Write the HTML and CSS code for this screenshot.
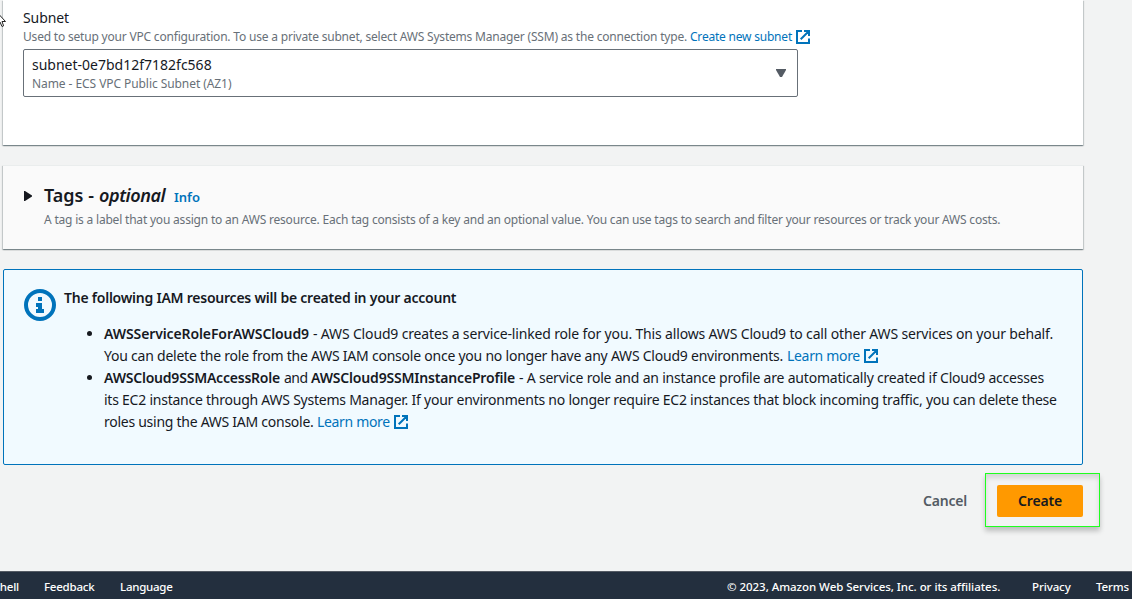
FILE: index.html
```
<!DOCTYPE html>
<html lang="en">
<head>
<meta charset="utf-8">
<title>Create environment</title>
<link rel="stylesheet" href="styles.css">
</head>
<body>
<svg class="sprite" aria-hidden="true">
  <symbol id="external" viewBox="0 0 14 14"><path d="M6 1H1v12h12V8.5M8 1h5v5M4.7 9.3L12.5 1.5" fill="none" stroke="currentColor" stroke-width="2"/></symbol>
</svg>
<svg class="cursor" viewBox="0 0 7 16" aria-hidden="true"><path d="M-4 0V12L0 9L2 13.5L3.6 12.8L2 8.5H5.5L-.5 2Z" fill="#fff" stroke="#222" stroke-width="1"/></svg>
<main class="page">
  <section class="card network">
    <div class="label">Subnet</div>
    <div class="hint"><span class="fit-hint">Used to setup your VPC configuration. To use a private subnet, select AWS Systems Manager (SSM) as the connection type.</span><a class="link hint-link">Create new subnet</a><svg class="ext"><use href="#external"/></svg></div>
    <div class="select">
      <div class="select-text">
        <div class="value">subnet-0e7bd12f7182fc568</div>
        <div class="detail">Name - ECS VPC Public Subnet (AZ1)</div>
      </div>
      <svg class="caret" viewBox="0 0 10 8"><path d="M0 0H10V1L6 8H4L0 1Z" fill="#545b64"/></svg>
    </div>
  </section>

  <section class="card tags">
    <svg class="expand" viewBox="0 0 8 10"><path d="M0 0H1L8 4.5v1L1 10H0Z" fill="#16191f"/></svg>
    <div>
      <div class="tags-title"><h2>Tags -</h2><em>optional</em><a class="info">Info</a></div>
      <p class="tags-desc">A tag is a label that you assign to an AWS resource. Each tag consists of a key and an optional value. You can use tags to search and filter your resources or track your AWS costs.</p>
    </div>
  </section>

  <section class="alert">
    <svg class="alert-icon" viewBox="0 0 32 32"><circle cx="16" cy="16" r="14" fill="none" stroke="#0073bb" stroke-width="4"/><path d="M14 8h4v4h-4ZM12 14h6v6h2v4h-8v-4h2v-2h-2Z" fill="#0073bb"/></svg>
    <div class="alert-body">
      <h3>The following IAM resources will be created in your account</h3>
      <ul>
        <li>
          <div class="line"><b class="role-a">AWSServiceRoleForAWSCloud9</b><span class="text-a">- AWS Cloud9 creates a service-linked role for you. This allows AWS Cloud9 to call other AWS services on your behalf.</span></div>
          <div class="line"><span>You can delete the role from the AWS IAM console once you no longer have any AWS Cloud9 environments.</span><a class="link learn">Learn more</a><svg class="ext"><use href="#external"/></svg></div>
        </li>
        <li>
          <div class="line"><b class="role-b">AWSCloud9SSMAccessRole</b><span class="and">and</span><b class="role-c">AWSCloud9SSMInstanceProfile</b><span class="text-b">- A service role and an instance profile are automatically created if Cloud9 accesses</span></div>
          <div class="line"><span class="text-c">its EC2 instance through AWS Systems Manager. If your environments no longer require EC2 instances that block incoming traffic, you can delete these</span></div>
          <div class="line"><span class="text-d">roles using the AWS IAM console.</span><a class="link learn">Learn more</a><svg class="ext"><use href="#external"/></svg></div>
        </li>
      </ul>
    </div>
  </section>

  <div class="actions">
    <a class="cancel">Cancel</a>
    <div class="create-wrap"><button class="create">Create</button><span class="highlight"></span></div>
  </div>
</main>
<footer class="footer">
  <nav class="foot-left"><a class="shell">CloudShell</a><a class="feedback">Feedback</a><a class="language">Language</a></nav>
  <div class="foot-right"><span class="copyright">© 2023, Amazon Web Services, Inc. or its affiliates.</span><a class="privacy">Privacy</a><a class="terms">Terms</a></div>
</footer>
</body>
</html>
```
FILE: styles.css
```
* { box-sizing: border-box; }
body { margin: 0; width: 1132px; height: 599px; overflow: hidden; display: flex; flex-direction: column; background: #f2f3f3; color: #16191f; font: 14px/22px "Noto Sans", sans-serif; white-space: nowrap; }
h2, h3, p, ul { margin: 0; padding: 0; }
.sprite { position: absolute; width: 0; height: 0; }
.cursor { position: absolute; left: 0; top: 13px; width: 7px; height: 16px; }
.page { width: 1080px; margin-left: 3px; flex: 1; display: flex; flex-direction: column; }
.card { border-top: 1px solid #eaeded; box-shadow: 0 1px 1px 0 rgba(0,28,36,.3), 1px 1px 1px 0 rgba(0,28,36,.15), -1px 1px 1px 0 rgba(0,28,36,.15); }
.link { color: #0073bb; }
.ext { width: 14px; height: 14px; color: #0073bb; flex: none; }

.network { height: 145px; border-top: 0; background: #fff; padding: 7px 20px 0; }
.label { letter-spacing: -.08px; }
.hint { display: flex; align-items: center; height: 16px; margin-bottom: 4px; font-size: 12px; color: #687078; }
.fit-hint { width: 667px; letter-spacing: -.193px; }
.hint-link { width: 106px; letter-spacing: -.21px; }
.select { display: flex; justify-content: space-between; width: 775px; height: 48px; padding: 5px 11px 0 8px; border: 1px solid #687078; border-radius: 2px; }
.value { height: 20px; line-height: 20px; }
.detail { font-size: 12px; line-height: 18px; letter-spacing: -.07px; color: #687078; }
.caret { width: 10px; height: 8px; margin-top: 14px; }

.tags { display: flex; height: 84px; margin-top: 20px; padding: 18px 20px 0 21px; background: #fafafa; }
.expand { width: 8px; height: 10px; margin: 7px 12px 0 0; }
.tags-title { display: flex; align-items: baseline; height: 25px; line-height: 22px; font-size: 18px; font-weight: 600; }
.tags-title h2 { width: 55px; font: inherit; }
.tags-title em { width: 75px; letter-spacing: -.42px; }
.info { font-size: 13px; font-weight: 600; color: #0073bb; }
.tags-desc { font-size: 12px; line-height: 22px; letter-spacing: -.198px; color: #687078; }

.alert { display: flex; height: 196px; margin-top: 20px; padding: 17px 20px; border: 1px solid #0073bb; border-radius: 2px; background: #f1faff; }
.alert-icon { width: 32px; height: 32px; margin: 2px 8px 0 0; }
.alert-body { letter-spacing: -.23px; }
.alert h3 { margin-bottom: 14px; font-size: 14px; font-weight: 600; letter-spacing: -.235px; }
.alert ul { padding-left: 40px; }
.line { display: flex; align-items: center; height: 22px; gap: 4px; }
.line b { font-weight: 600; }
.role-a { width: 205px; letter-spacing: -.11px; }
.text-a { letter-spacing: -.158px; }
.role-b { width: 176px; letter-spacing: -.218px; }
.and { width: 23px; letter-spacing: -.5px; }
.role-c { width: 204px; letter-spacing: -.182px; }
.text-b { letter-spacing: -.206px; }
.text-c { letter-spacing: -.238px; }
.text-d { width: 209px; letter-spacing: -.265px; }
.learn { width: 73px; letter-spacing: -.33px; }

.actions { display: flex; justify-content: flex-end; align-items: center; height: 32px; margin-top: 20px; gap: 30px; }
.cancel { font-weight: 600; letter-spacing: -.2px; color: #545b64; }
.create-wrap { position: relative; }
.create { display: block; width: 86px; height: 32px; padding: 0; border: 0; border-radius: 2px; background: #ff9900; color: #16191f; font: 600 14px/32px "Noto Sans", sans-serif; letter-spacing: -.16px; }
.highlight { position: absolute; left: -12px; top: -12px; width: 115px; height: 54px; border: 1px solid #1eff1e; }
.highlight::before { content: ""; position: absolute; inset: -1px; z-index: -1; border: 1px solid transparent; box-shadow: 0 4px 5px rgba(0,0,0,.22), inset 0 4px 5px rgba(0,0,0,.12); }

.footer { display: flex; justify-content: space-between; height: 28px; border-top: 1px solid #545b64; background: #232f3e; color: #fff; font-size: 11.5px; line-height: 30px; font-weight: 500; }
.foot-left { display: flex; gap: 25px; }
.shell { display: flex; justify-content: flex-end; width: 19px; letter-spacing: -.2px; }
.feedback { width: 51px; letter-spacing: -.22px; }
.language { letter-spacing: -.25px; }
.foot-right { display: flex; }
.copyright { width: 305px; letter-spacing: -.04px; }
.privacy { width: 64px; letter-spacing: -.1px; }
.terms { width: 36px; letter-spacing: -.15px; }
```
